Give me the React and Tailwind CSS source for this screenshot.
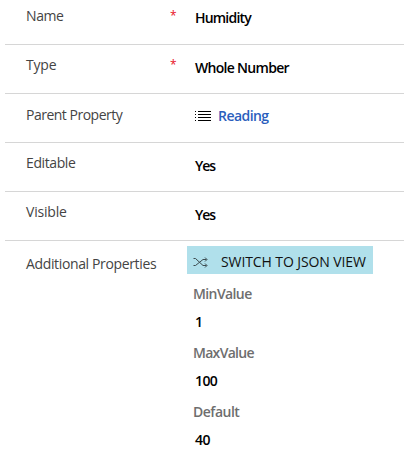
const rowBase = 'flex h-[49px] items-start border-b border-[#d6d6d6]';

function Row({ label, required, className = rowBase, labelClass, starClass = 'pt-[12px]', valueClass, children }) {
  return (
    <div className={className}>
      <div className={`w-[144px] shrink-0 pl-[21px] font-normal text-[#444] whitespace-nowrap ${labelClass}`}>{label}</div>
      <div className={`w-[45px] shrink-0 pl-[21px] text-[12px] leading-4 text-[#e81123] ${starClass}`}>{required ? '*' : ''}</div>
      <div className={`pl-px whitespace-nowrap ${valueClass}`}>{children}</div>
    </div>
  );
}

function ListIcon() {
  return (
    <svg width="16" height="11" viewBox="0 0 16 11" fill="#000" shapeRendering="crispEdges" className="mt-[5px] mr-[7px]">
      <path d="M0 0h1v1H0zM3 0h13v1H3zM0 3h1v1H0zM3 3h13v1H3zM0 6h1v1H0zM3 6h13v1H3zM0 9h1v1H0zM3 9h13v1H3z" />
    </svg>
  );
}

function ShuffleIcon() {
  return (
    <svg width="15" height="11" viewBox="0 0 15 11" fill="none" stroke="#3c4c50" strokeWidth="1" className="mt-[11px] ml-[6px]">
      <path d="M.5 1.5h2L10 8.5h3.5M.5 8.5h2L10 2.5h3.5M12 .5l2 2-2 2M12 6.5l2 2-2 2" />
    </svg>
  );
}

function Field({ name, nameClass, value, valueClass }) {
  return (
    <div className="h-[59px]">
      <div className={`ml-[6px] font-semibold text-[#6e6e6e] ${nameClass}`}>{name}</div>
      <div className={`mt-[8px] ml-[8px] font-semibold text-black ${valueClass}`}>{value}</div>
    </div>
  );
}

export default function App() {
  return (
    <div className="h-[460px] w-[404px] overflow-hidden bg-white pl-[5px] font-['Open_Sans',sans-serif] text-[14px] leading-5">
      <Row className="flex h-[45px] items-start border-b border-[#d6d6d6]" label="Name" required starClass="pt-[8px]" labelClass="pt-[6px] tracking-[-0.4px]" valueClass="pt-[8px] font-semibold text-black tracking-[-0.8px]">Humidity</Row>
      <Row label="Type" required labelClass="pt-[10px] tracking-[-0.2px]" valueClass="pt-[13px] font-semibold text-black tracking-[-0.7px]">Whole Number</Row>
      <Row label="Parent Property" labelClass="pt-[11px] tracking-[-0.5px]" valueClass="flex pt-[12px] font-semibold text-[#2a5ebd] tracking-[-0.55px]">
        <ListIcon />Reading
      </Row>
      <Row label="Editable" labelClass="pt-[10px] tracking-[-0.4px]" valueClass="pt-[13px] font-semibold text-black tracking-[-1px]">Yes</Row>
      <Row label="Visible" labelClass="pt-[10px] tracking-[-0.2px]" valueClass="pt-[13px] font-semibold text-black tracking-[-1px]">Yes</Row>
      <div className="flex items-start">
        <div className="w-[182px] shrink-0 pt-[13px] pl-[21px] whitespace-nowrap text-[#444] tracking-[-0.36px]">Additional Properties</div>
        <div>
          <button className="mt-[5px] flex h-[28px] w-[186px] items-start bg-[#b0e0eb] text-[#111]">
            <ShuffleIcon />
            <span className="ml-[13px] pt-[6px] whitespace-nowrap tracking-[-0.1px]">SWITCH TO JSON VIEW</span>
          </button>
          <div className="mt-[10px]">
            <Field name="MinValue" nameClass="tracking-[-0.6px]" value="1" valueClass="" />
            <Field name="MaxValue" nameClass="tracking-[-0.7px]" value="100" valueClass="tracking-[-0.6px]" />
            <Field name="Default" nameClass="tracking-[-0.5px]" value="40" valueClass="tracking-[-0.6px]" />
          </div>
        </div>
      </div>
    </div>
  );
}
